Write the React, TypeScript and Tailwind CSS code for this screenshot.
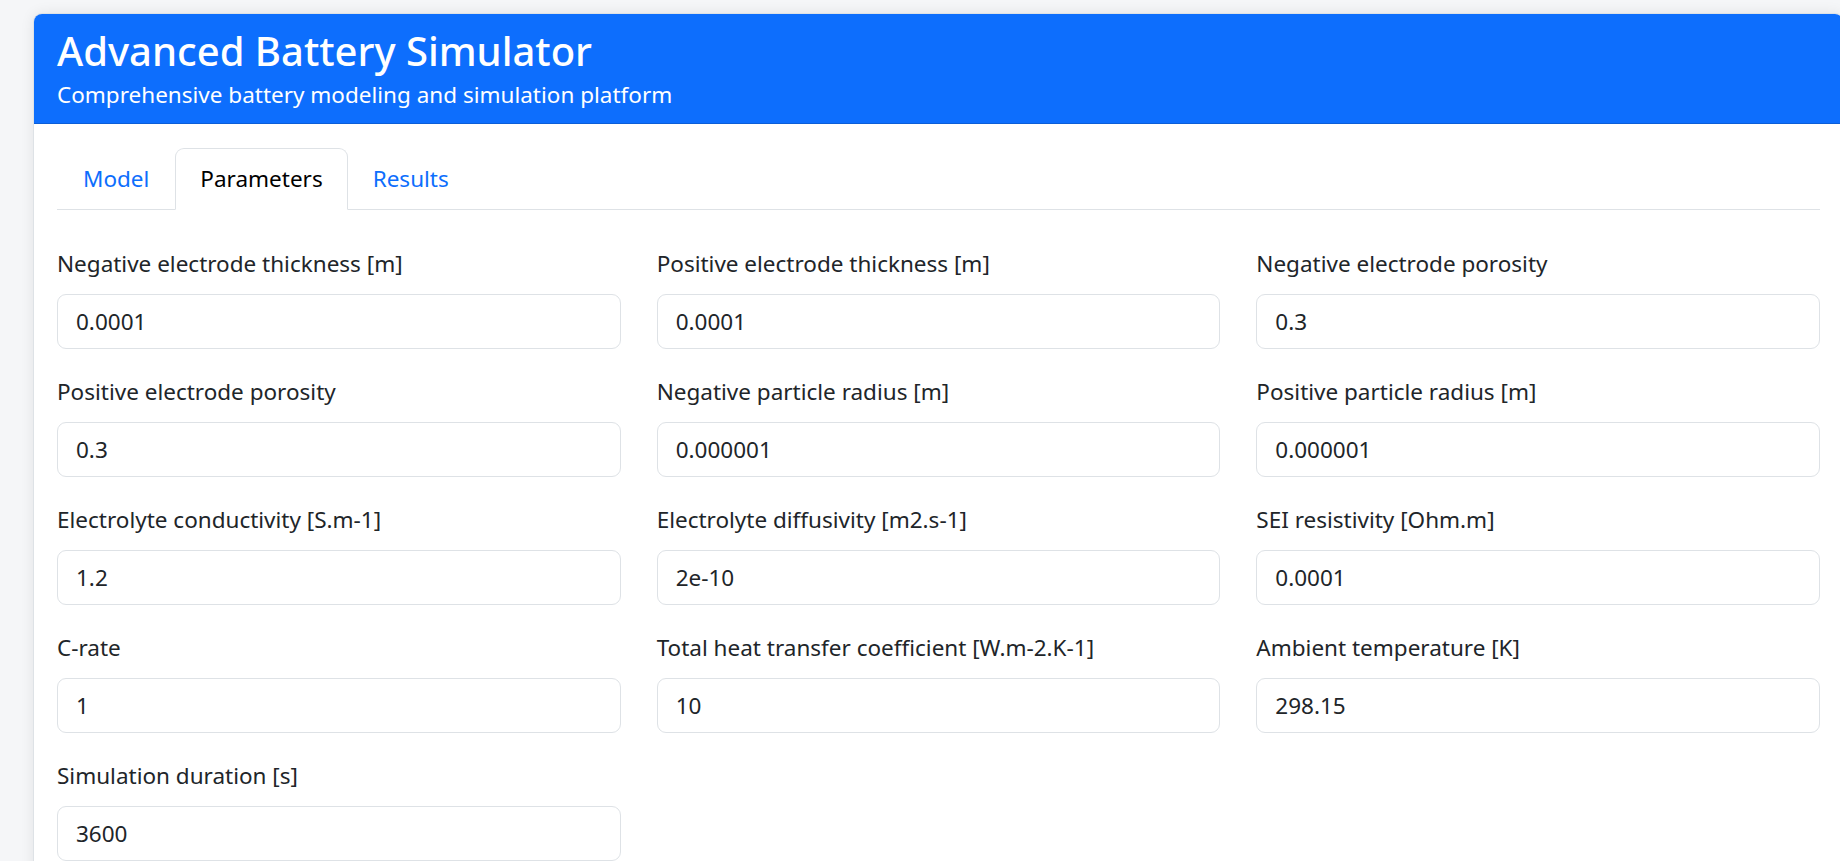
import React from "react";

const fields: [string, string][] = [
  ["Negative electrode thickness [m]", "0.0001"],
  ["Positive electrode thickness [m]", "0.0001"],
  ["Negative electrode porosity", "0.3"],
  ["Positive electrode porosity", "0.3"],
  ["Negative particle radius [m]", "0.000001"],
  ["Positive particle radius [m]", "0.000001"],
  ["Electrolyte conductivity [S.m-1]", "1.2"],
  ["Electrolyte diffusivity [m2.s-1]", "2e-10"],
  ["SEI resistivity [Ohm.m]", "0.0001"],
  ["C-rate", "1"],
  ["Total heat transfer coefficient [W.m-2.K-1]", "10"],
  ["Ambient temperature [K]", "298.15"],
  ["Simulation duration [s]", "3600"],
];

export default function App() {
  return (
    <div
      className="w-[1840px] h-[861px] overflow-hidden bg-[#f5f6f8] text-[#212529]"
      style={{ fontFamily: '"Noto Sans", "Open Sans", sans-serif' }}
    >
      <div className="pt-[13px] pl-[33px]">
        <div className="w-[1811px] bg-white border border-[#dee2e6] rounded-[9px] overflow-hidden shadow-[0_0_14px_rgba(0,0,0,0.08)]">
          <div className="bg-[#0d6efd] text-white px-[23px] pt-[10px] pb-[10px] border-b border-[#0b5ed7]">
            <h1 className="text-[40px] leading-[53px] font-medium m-0">Advanced Battery Simulator</h1>
            <p className="text-[22.5px] leading-[36px] m-0">Comprehensive battery modeling and simulation platform</p>
          </div>
          <div className="px-[23px] pt-[24px] pb-[24px]">
            <div className="flex border-b border-[#dee2e6] text-[22.5px] leading-[36px]">
              <div className="px-[25px] py-[12px] border border-transparent -mb-px text-[#0d6efd] rounded-t-[9px]">Model</div>
              <div className="px-[24px] py-[12px] border border-[#dee2e6] border-b-white bg-white -mb-px text-black rounded-t-[9px]">Parameters</div>
              <div className="px-[24px] py-[12px] border border-transparent -mb-px text-[#0d6efd] rounded-t-[9px]">Results</div>
            </div>
            <div className="mt-[36px] grid grid-cols-3 gap-x-[36px] gap-y-[25px]">
              {fields.map(([label, value]) => (
                <div key={label} className="flex flex-col">
                  <label className="text-[22.5px] leading-[36px] mb-[12px]">{label}</label>
                  <div className="h-[55px] border border-[#dee2e6] rounded-[9px] px-[18px] flex items-center text-[22.5px] leading-[36px] text-[#212529]">
                    {value}
                  </div>
                </div>
              ))}
            </div>
          </div>
        </div>
      </div>
    </div>
  );
}
